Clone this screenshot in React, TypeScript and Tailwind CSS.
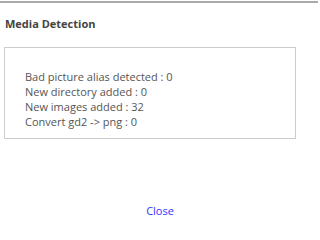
export default function App() {
  const lines = [
    "Bad picture alias detected : 0",
    "New directory added : 0",
    "New images added : 32",
    "Convert gd2 -> png : 0",
  ]
  return (
    <div className="w-[318px] h-[231px] bg-white font-['Open_Sans',sans-serif] text-[#555] border-t-2 border-[#aaa] mt-px">
      <h1 className="pl-[5px] pt-[13px] text-[11px] font-bold text-[#444] leading-[15px]">Media Detection</h1>
      <div className="ml-1 mt-[16px] w-[292px] h-[92px] border border-[#ccc] pl-5 pt-[21px] text-[11px] leading-[15px]">
        {lines.map((l) => (
          <div key={l}>{l}</div>
        ))}
      </div>
      <div className="mt-[64px] text-center text-[11px] leading-[15px]">
        <a className="text-[#33f] ml-[2px]">Close</a>
      </div>
    </div>
  )
}
